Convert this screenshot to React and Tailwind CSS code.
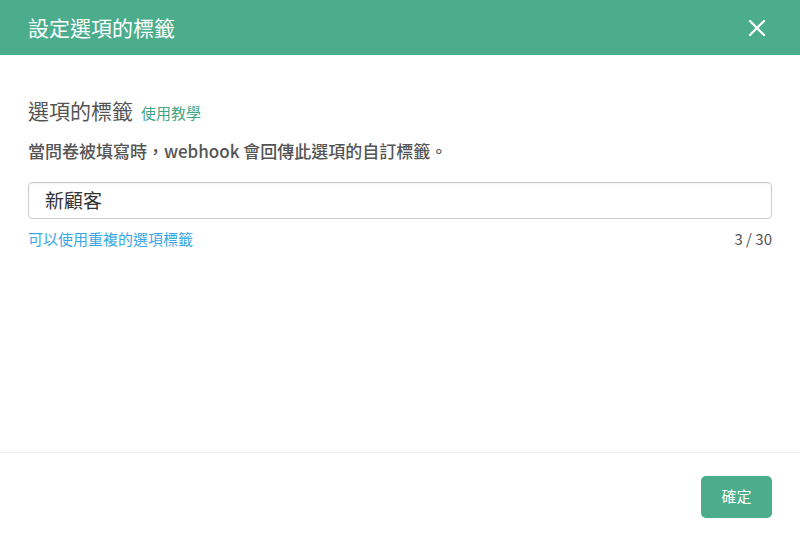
export default function App() {
  const f = { fontFamily: '"Noto Sans CJK TC", "Noto Sans", sans-serif' };
  return (
    <div style={f} className="w-[800px] h-[540px] bg-white flex flex-col">
      <div className="h-[55px] bg-[#4cad8d] flex items-center justify-between px-7 shrink-0">
        <span className="text-white text-[21px]">設定選項的標籤</span>
        <svg width="18" height="18" viewBox="0 0 18 18" className="mr-[6px]"><path d="M2 2L16 16M16 2L2 16" stroke="white" strokeWidth="2.2" strokeLinecap="round"/></svg>
      </div>
      <div className="flex-1 px-7 pt-[40px]">
        <div className="flex items-baseline gap-[8px] leading-[30px]">
          <span className="text-[21px] text-[#555]">選項的標籤</span>
          <span className="text-[15px] text-[#3fa584]">使用教學</span>
        </div>
        <div className="mt-[10px] text-[17px] text-[#555] font-medium leading-[26px]">當問卷被填寫時，webhook 會回傳此選項的自訂標籤。</div>
        <div className="mt-[18px] h-[37px] border border-[#ccc] rounded-[4px] flex items-center px-4 text-[19px] text-[#333] shadow-[inset_0_1px_2px_rgba(0,0,0,0.05)]">新顧客</div>
        <div className="mt-[9px] flex justify-between text-[15px]">
          <span className="text-[#3aa7e6]">可以使用重複的選項標籤</span>
          <span className="text-[#555]">3 / 30</span>
        </div>
      </div>
      <div className="h-[88px] border-t border-[#eee] flex items-center justify-end px-7 shrink-0">
        <button className="w-[71px] h-[42px] rounded-[5px] bg-[#4cad8d] text-white text-[15px]">確定</button>
      </div>
    </div>
  );
}
